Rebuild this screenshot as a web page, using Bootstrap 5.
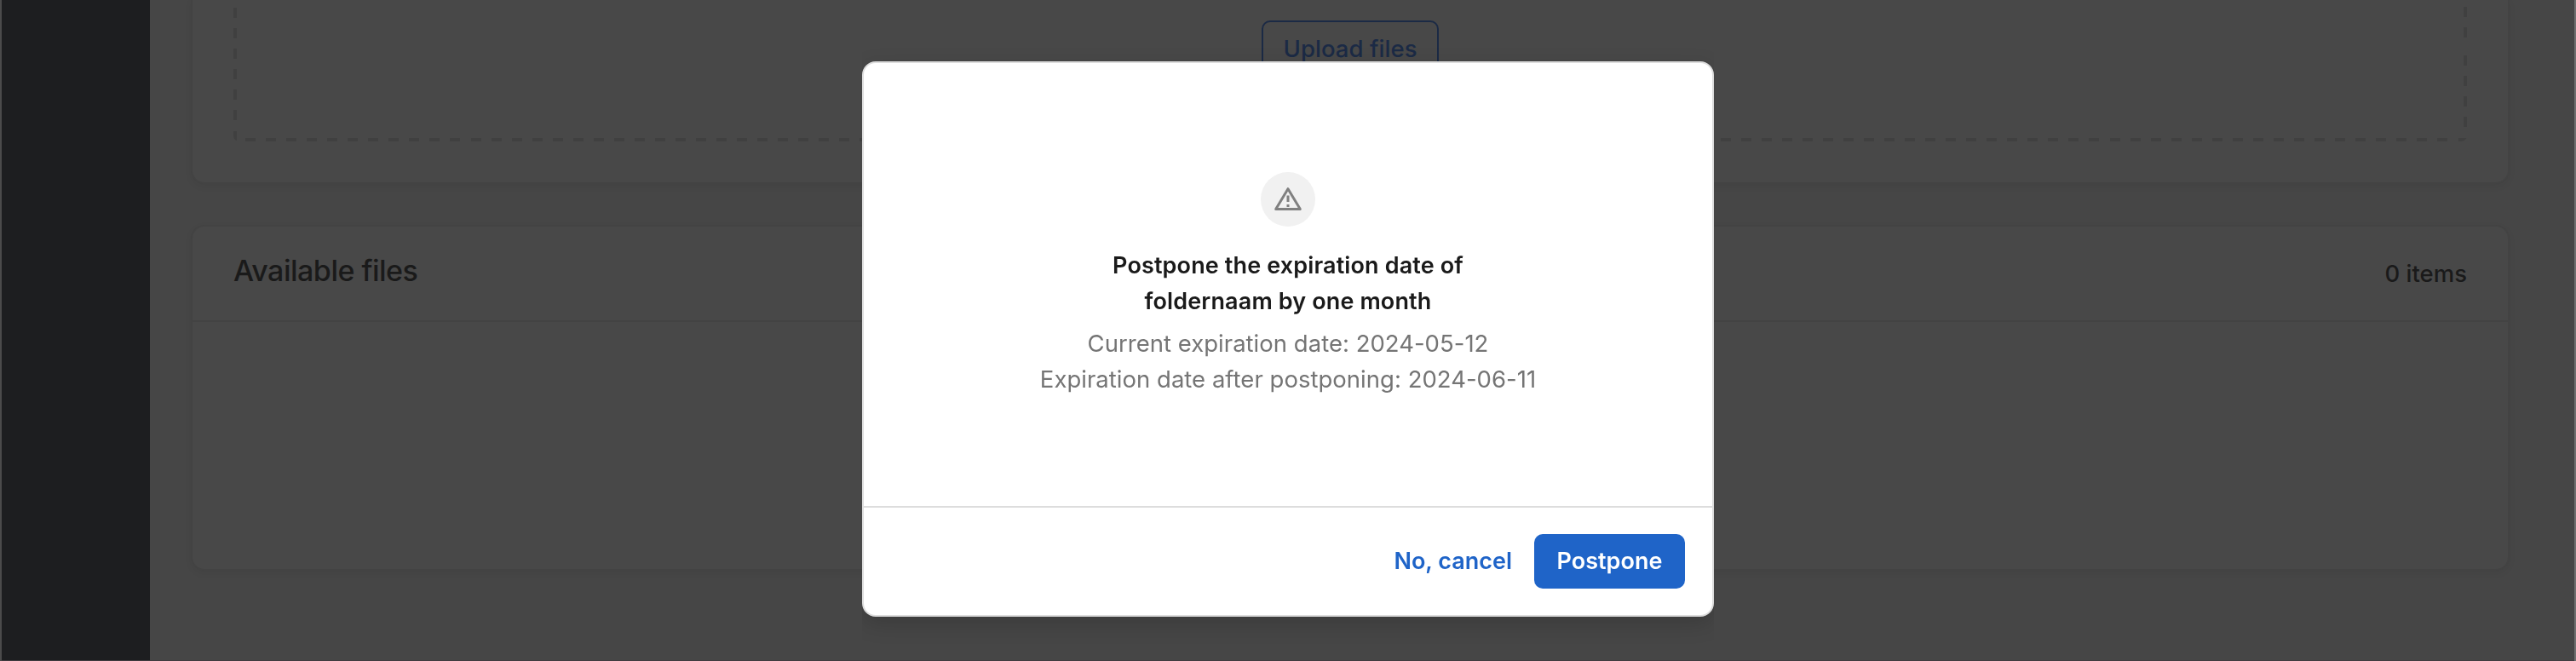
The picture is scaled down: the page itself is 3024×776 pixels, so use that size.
<!DOCTYPE html>
<html lang="en">
<head>
<meta charset="utf-8">
<title>Postpone expiration date</title>
<link rel="stylesheet" href="https://cdn.jsdelivr.net/npm/bootstrap@5.3.0/dist/css/bootstrap.min.css">
<style>
html{height:776px;overflow:hidden}
body{margin:0;height:776px;overflow:hidden;background:#464646;color:#1a1a1a;font-family:Inter,"Liberation Sans",sans-serif;font-size:27.5px;line-height:42px;font-weight:500}
.page-shell{height:776px;border-left:2px solid #4b4b4b;border-right:2px solid #6e6e6e;box-shadow:inset 0 -1px #403c40}
.side-rail{width:174px;height:775px;background:#1d1e20}
.content-area{padding:0 76px 0 48px}
.panel{background:#484848;border:2px solid #434343;border-radius:16px;box-shadow:0 3px 8px rgba(0,0,0,.05);color:inherit}
.upload-panel{height:216px;border-top:0;border-radius:0 0 16px 16px;padding:0 48px 48px}
.drop-zone{height:166px;border-radius:0 0 7px 7px;padding-top:24px;
background:
 linear-gradient(#404040,#404040) left 0 bottom 0/4px 12px no-repeat,
 linear-gradient(#404040,#404040) right 0 bottom 0/10px 4px no-repeat,
 repeating-linear-gradient(180deg,#404040 0 12px,transparent 12px 24px) left 0 top 9px/4px 144px no-repeat,
 linear-gradient(#404040,#404040) right 0 top 8px/4px 12px no-repeat,
 linear-gradient(#404040,#404040) right 0 top 32px/4px 12px no-repeat,
 repeating-linear-gradient(180deg,#404040 0 12px,transparent 12px 24px) right 0 top 65px/4px 84px no-repeat,
 repeating-linear-gradient(90deg,#404040 0 12px,transparent 12px 24.05px) left 14px bottom 0/2590px 4px no-repeat}
.btn-upload{width:208px;height:66px;border:2px solid #1b2a45;border-radius:10px;color:#1b2a45;padding:0;font-size:27.5px;line-height:62px;font-weight:500;letter-spacing:.05px}
.files-panel{height:406px;margin-top:48px}
.files-head{height:112px;padding:0 48px;border-bottom:2px solid #434343}
.files-title{font-size:34px;line-height:44px;font-weight:500;letter-spacing:-.5px;margin:-7px 0 0}
.modal-dialog.confirm{width:1000px;max-width:none;margin:72px auto 0}
.confirm .modal-content{height:652px;border:2px solid #ddd;border-radius:16px;background:#fff;color:#1a1a1a;box-shadow:0 8px 26px rgba(0,0,0,.16);clip-path:inset(-20px 0 -50px 0)}
.confirm .modal-body{padding:128px 0 0}
.warn-disc{width:64px;height:64px;border-radius:50%;background:#f1f1f1}
.ask{width:480px;font-size:27px;line-height:42px;font-weight:600;letter-spacing:.13px;margin:25px 0 7px}
.dates{font-weight:400;color:#757575;letter-spacing:.02px}
.confirm .modal-footer{height:128px;padding:0 32px 0 0;border-top:2px solid #ddd;gap:26px}
.confirm .modal-footer>*{margin:0}
.btn-plain{color:#1f64c8;font-size:27px;font-weight:600;padding:0;border:0;line-height:64px}
.btn-go{width:177px;height:64px;background:#1f64c8;color:#fff;border:0;border-radius:10px;font-size:27px;font-weight:600;padding:0}
</style>
</head>
<body>
<div class="page-shell d-flex">
  <aside class="side-rail flex-shrink-0"></aside>
  <main class="content-area flex-grow-1">
    <section class="panel upload-panel">
      <div class="drop-zone d-flex justify-content-center align-items-start">
        <button class="btn btn-upload" type="button"><span>Upload files</span></button>
      </div>
    </section>
    <section class="panel files-panel">
      <header class="files-head d-flex justify-content-between align-items-center">
        <h2 class="files-title">Available files</h2>
        <span>0 items</span>
      </header>
    </section>
  </main>
</div>
<div class="modal show d-block overflow-hidden" tabindex="-1" role="dialog">
  <div class="modal-dialog confirm">
    <div class="modal-content">
      <div class="modal-body d-flex flex-column align-items-center text-center">
        <div class="warn-disc d-flex align-items-center justify-content-center">
          <svg width="36" height="32" viewBox="0 0 36 32" fill="none" stroke="#808080" stroke-width="3"><path d="M18 3.7 32.3 27.5H3.7Z" stroke-linejoin="round"/><path d="M18 11.5v7.5M18 22v3"/></svg>
        </div>
        <h5 class="ask"><span>Postpone the expiration date of</span><br><span>foldernaam by one month</span></h5>
        <div class="dates"><span>Current expiration date: 2024-05-12</span><br><span>Expiration date after postponing: 2024-06-11</span></div>
      </div>
      <div class="modal-footer d-flex flex-nowrap align-items-center justify-content-end">
        <button class="btn btn-plain" type="button"><span>No, cancel</span></button>
        <button class="btn btn-go" type="button"><span>Postpone</span></button>
      </div>
    </div>
  </div>
</div>
<script src="https://cdn.jsdelivr.net/npm/bootstrap@5.3.0/dist/js/bootstrap.bundle.min.js"></script>
</body>
</html>
